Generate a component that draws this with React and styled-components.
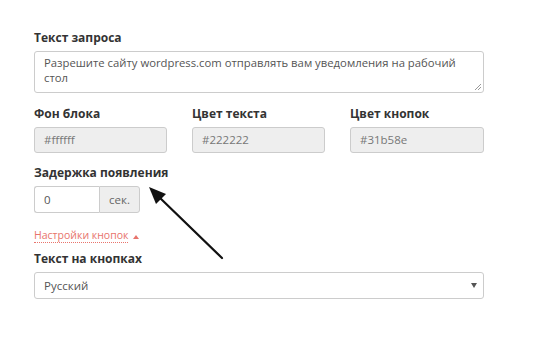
import React from "react";
import styled, { createGlobalStyle } from "styled-components";

const GlobalStyle = createGlobalStyle`
  html, body {
    margin: 0;
    padding: 0;
    background: #fff;
    font-family: "Open Sans", "Liberation Sans", sans-serif;
  }
`;

const Page = styled.div`
  position: relative;
  width: 546px;
  height: 337px;
  padding: 29px 62px 0 34px;
  box-sizing: border-box;
`;

const Group = styled.div`
  margin-bottom: ${(p) => p.$mb || 12}px;
`;

const Label = styled.div`
  font-size: 12px;
  font-weight: 700;
  color: #333;
  line-height: 18px;
  margin-bottom: 4px;
`;

const TextArea = styled.div`
  box-sizing: border-box;
  height: 42px;
  border: 1px solid #ccc;
  border-radius: 3px;
  padding: 3px 18px 3px 9px;
  font-size: 11.3px;
  line-height: 15px;
  color: #555;
  position: relative;
`;

const Grip = styled.svg`
  position: absolute;
  right: 1px;
  bottom: 1px;
`;

const Row = styled.div`
  display: grid;
  grid-template-columns: 133px 133px 134px;
  column-gap: 25px;
  margin-bottom: 11px;
`;

const Input = styled.div`
  box-sizing: border-box;
  height: 26px;
  border: 1px solid #ccc;
  border-radius: 3px;
  background: ${(p) => (p.$disabled ? "#eee" : "#fff")};
  padding: 0 9px;
  font-size: 11.5px;
  line-height: 24px;
  color: ${(p) => (p.$disabled ? "#777" : "#555")};
`;

const InputGroup = styled.div`
  display: flex;
  width: 106px;
  height: 27px;
`;

const GroupInput = styled(Input)`
  height: 27px;
  line-height: 25px;
  width: 65px;
  border-radius: 3px 0 0 3px;
  border-right: none;
`;

const Addon = styled.div`
  box-sizing: border-box;
  flex: 1;
  border: 1px solid #ccc;
  border-radius: 0 3px 3px 0;
  background: #eee;
  font-size: 11.5px;
  color: #666;
  line-height: 25px;
  text-align: center;
`;

const Toggle = styled.div`
  display: flex;
  align-items: center;
  gap: 5px;
  font-size: 10.5px;
  color: #e8746c;
  line-height: 16px;
  margin-bottom: 7px;
`;

const ToggleText = styled.span`
  border-bottom: 1px dotted #e8746c;
  line-height: 13px;
`;

const Caret = styled.span`
  width: 0;
  height: 0;
  border-left: 3px solid transparent;
  border-right: 3px solid transparent;
  border-bottom: 4px solid #e8746c;
  margin-top: 1px;
`;

const Select = styled.div`
  box-sizing: border-box;
  height: 27px;
  border: 1px solid #ccc;
  border-radius: 3px;
  padding: 0 9px;
  font-size: 11.5px;
  line-height: 25px;
  color: #555;
  display: flex;
  justify-content: space-between;
  align-items: center;
`;

const SelectArrow = styled.span`
  width: 0;
  height: 0;
  border-left: 3px solid transparent;
  border-right: 3px solid transparent;
  border-top: 5px solid #555;
  margin-right: -3px;
`;

const Pointer = styled.svg`
  position: absolute;
  left: 0;
  top: 0;
  pointer-events: none;
`;

export default function App() {
  return (
    <>
      <GlobalStyle />
      <Page>
        <Group>
          <Label>Текст запроса</Label>
          <TextArea>
            Разрешите сайту wordpress.com отправлять вам уведомления на рабочий стол
            <Grip width="9" height="9" viewBox="0 0 9 9">
              <path d="M8 2 L2 8 M8 5 L5 8" stroke="#999" strokeWidth="1" />
            </Grip>
          </TextArea>
        </Group>
        <Row>
          <div>
            <Label>Фон блока</Label>
            <Input $disabled>#ffffff</Input>
          </div>
          <div>
            <Label>Цвет текста</Label>
            <Input $disabled>#222222</Input>
          </div>
          <div>
            <Label>Цвет кнопок</Label>
            <Input $disabled>#31b58e</Input>
          </div>
        </Row>
        <Group $mb={16}>
          <Label>Задержка появления</Label>
          <InputGroup>
            <GroupInput>0</GroupInput>
            <Addon>сек.</Addon>
          </InputGroup>
        </Group>
        <Toggle>
          <ToggleText>Настройки кнопок</ToggleText>
          <Caret />
        </Toggle>
        <Group>
          <Label>Текст на кнопках</Label>
          <Select>
            Русский
            <SelectArrow />
          </Select>
        </Group>
        <Pointer width="546" height="337" viewBox="0 0 546 337">
          <line x1="222" y1="258" x2="158" y2="196" stroke="#111" strokeWidth="2.2" strokeLinecap="round" />
          <polygon points="149,187 166,194 156,204" fill="#111" />
        </Pointer>
      </Page>
    </>
  );
}
